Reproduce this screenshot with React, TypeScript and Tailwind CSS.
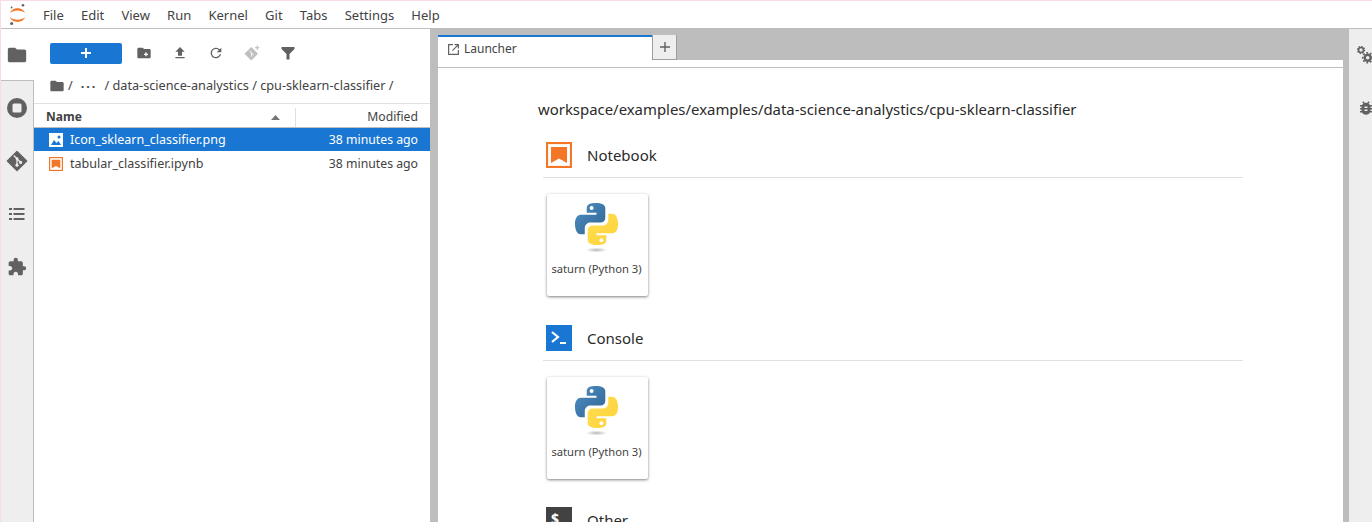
import React from 'react'

const PythonLogo = () => (
  <svg width="45" height="51" viewBox="0 0 46 52">
    <defs>
      <linearGradient id="pyBlue" x1="0" y1="0" x2="1" y2="1">
        <stop offset="0" stopColor="#4f8fc4" />
        <stop offset="1" stopColor="#2f6491" />
      </linearGradient>
      <linearGradient id="pyYellow" x1="0" y1="0" x2="1" y2="1">
        <stop offset="0" stopColor="#ffe052" />
        <stop offset="1" stopColor="#ffd03a" />
      </linearGradient>
      <radialGradient id="pyShadow">
        <stop offset="0" stopColor="#b8b8b8" />
        <stop offset="1" stopColor="#ffffff" />
      </radialGradient>
    </defs>
    <path
      d="M22.5 1C17 1 13 2.400 13 6V11H23V13H7C3 13 1 17 1 22.500C1 28 3 33 7 33H11V27C11 23 14 21 17 21H27C30 21 32 19 32 16V6C32 3 28 1 22.500 1Z"
      fill="url(#pyBlue)"
    />
    <path
      d="M23.5 44C29 44 33 42.600 33 39V34H23V32H39C43 32 45 28 45 22.500C45 17 43 12 39 12H35V18C35 22 32 24 29 24H19C16 24 14 26 14 29V39C14 42 18 44 23.500 44Z"
      fill="url(#pyYellow)"
    />
    <circle cx="18" cy="6" r="2" fill="#fff" />
    <circle cx="28" cy="39" r="2" fill="#fff" />
    <ellipse cx="23" cy="49" rx="11" ry="2.500" fill="url(#pyShadow)" />
  </svg>
)

const Kernel = () => (
  <div className="flex h-[102px] w-[101px] flex-col items-center rounded-[2px] bg-white pr-[2px] pt-[8px] shadow-[0_1px_3px_rgba(0,0,0,0.5)]">
    <PythonLogo />
    <div className="mt-[8px] text-[11.2px] leading-[16px] text-[#424242]">saturn (Python 3)</div>
  </div>
)

const Section = ({ icon, title, top }: { icon: React.ReactNode; title: string; top: string }) => (
  <div className={`ml-[105px] w-[700px] ${top}`}>
    <div className="flex h-[40px] items-center border-b border-[#e0e0e0] pb-[5px]">
      <div className="ml-[3px] flex h-[26px] w-[26px] items-center justify-center">{icon}</div>
      <div className="ml-[15px] text-[15px] text-[#2a2a2a]">{title}</div>
    </div>
    <div className="ml-[4px] mt-[16px]">
      <Kernel />
    </div>
  </div>
)

const NotebookIcon = ({ size = 26, bw = 2.200 }: { size?: number; bw?: number }) => (
  <svg width={size} height={size} viewBox="0 0 26 26">
    <rect x="1" y="1" width="24" height="24" fill="#fff" stroke="#f37726" strokeWidth={bw} />
    <path d="M5 5H21V21L13 16.500L5 21Z" fill="#f37726" />
  </svg>
)

const Folder = ({ size = 18 }: { size?: number }) => (
  <svg width={size} height={size} viewBox="0 0 24 24" fill="#616161">
    <path d="M10 4H4C2.900 4 2 4.900 2 6V18C2 19.100 2.900 20 4 20H20C21.100 20 22 19.100 22 18V8C22 6.900 21.100 6 20 6H12Z" />
  </svg>
)

const GitIcon = () => (
  <svg width="22" height="22" viewBox="0 0 24 24">
    <path d="M12 1.500L22.500 12L12 22.500L1.500 12Z" fill="#616161" strokeLinejoin="round" stroke="#616161" strokeWidth="1.500" />
    <path d="M8.500 6L12 9.500V16M12 9.500L16 13.500" stroke="#eee" strokeWidth="1.400" fill="none" />
    <circle cx="12" cy="16.500" r="1.700" fill="#eee" />
    <circle cx="16" cy="13.500" r="1.700" fill="#eee" />
    <circle cx="12" cy="9.500" r="1.500" fill="#eee" />
  </svg>
)

const menu = ['File', 'Edit', 'View', 'Run', 'Kernel', 'Git', 'Tabs', 'Settings', 'Help']

export default function App() {
  return (
    <div
      className="flex h-[522px] w-[1372px] flex-col overflow-hidden border-l border-t border-[#f9dbe4] bg-white text-[#424242]"
      style={{ fontFamily: '"Noto Sans", sans-serif' }}
    >
      {/* top menu */}
      <div className="flex h-[28px] shrink-0 items-center border-b border-[#bdbdbd] bg-white">
        <svg width="20" height="24" viewBox="0 0 20 24" className="ml-[6px]">
          <path d="M3 10C5 3.500 16 3.500 18 10C15 6.500 6 6.500 3 10Z" fill="#f37726" />
          <path d="M3 14C5 20.500 16 20.500 18 14C15 17.500 6 17.500 3 14Z" fill="#f37726" />
          <circle cx="16" cy="2.200" r="1.300" fill="#616161" />
          <circle cx="4.600" cy="4.500" r="0.900" fill="#616161" />
          <circle cx="4.600" cy="20.500" r="1.500" fill="#616161" />
        </svg>
        <div className="ml-[9px] flex">
          {menu.map((m) => (
            <div key={m} className="mr-[3.200px] px-[7px] text-[13px] leading-[20px] text-[#424242]">
              {m}
            </div>
          ))}
        </div>
      </div>

      <div className="flex min-h-0 flex-1">
        {/* left rail */}
        <div className="flex w-[33px] shrink-0 flex-col border-r border-[#bdbdbd] bg-[#eeeeee]">
          <div className="-mr-px flex h-[52px] items-center justify-center border-b border-[#bdbdbd] bg-white pr-[1px]">
            <Folder size={22} />
          </div>
          <div className="flex flex-col items-center">
            <div className="flex h-[53px] w-full items-center justify-center">
              <svg width="22" height="22" viewBox="0 0 22 22">
                <circle cx="11" cy="11" r="10" fill="#616161" />
                <rect x="6.500" y="6.500" width="9" height="9" rx="1.500" fill="#eee" />
              </svg>
            </div>
            <div className="flex h-[53px] w-full items-center justify-center">
              <GitIcon />
            </div>
            <div className="flex h-[53px] w-full items-center justify-center">
              <svg width="18" height="18" viewBox="0 0 18 18" fill="#616161">
                <rect x="1" y="3" width="3" height="2" />
                <rect x="5.500" y="3" width="11" height="2" />
                <rect x="1" y="8" width="3" height="2" />
                <rect x="5.500" y="8" width="11" height="2" />
                <rect x="1" y="13" width="3" height="2" />
                <rect x="5.500" y="13" width="11" height="2" />
              </svg>
            </div>
            <div className="flex h-[53px] w-full items-center justify-center">
              <svg width="20" height="20" viewBox="0 0 24 24" fill="#616161">
                <path d="M20.500 11H19V7C19 5.900 18.100 5 17 5H13V3.500C13 2.100 11.900 1 10.500 1S8 2.100 8 3.500V5H4C2.900 5 2 5.900 2 7V10.800H3.500C5 10.800 6.200 12 6.200 13.500S5 16.200 3.500 16.200H2V20C2 21.100 2.900 22 4 22H7.800V20.500C7.800 19 9 17.800 10.500 17.800S13.200 19 13.200 20.500V22H17C18.100 22 19 21.100 19 20V16H20.500C21.900 16 23 14.900 23 13.500S21.900 11 20.500 11Z" />
              </svg>
            </div>
          </div>
        </div>

        {/* file browser */}
        <div className="flex w-[396px] shrink-0 flex-col bg-white">
          <div className="flex h-[48px] shrink-0 items-center pl-[16px]">
            <div className="flex h-[21px] w-[72px] items-center justify-center rounded-[2px] bg-[#1976d2]">
              <svg width="12" height="12" viewBox="0 0 12 12" fill="#fff">
                <path d="M5 1H7V5H11V7H7V11H5V7H1V5H5Z" />
              </svg>
            </div>
            <div className="ml-[13px] flex h-[24px] w-[18px] items-center justify-center">
              <svg width="16" height="16" viewBox="0 0 24 24" fill="#616161">
                <path d="M10 4H4C2.900 4 2 4.900 2 6V18C2 19.100 2.900 20 4 20H20C21.100 20 22 19.100 22 18V8C22 6.900 21.100 6 20 6H12Z" />
                <path d="M14 11H16V13H18V15H16V17H14V15H12V13H14Z" fill="#fff" />
              </svg>
            </div>
            <div className="ml-[18px] flex h-[24px] w-[18px] items-center justify-center">
              <svg width="16" height="16" viewBox="0 0 24 24" fill="#616161">
                <path d="M9 16H15V10H19L12 3L5 10H9ZM5 18H19V20H5Z" />
              </svg>
            </div>
            <div className="ml-[18px] flex h-[24px] w-[18px] items-center justify-center">
              <svg width="16" height="16" viewBox="0 0 24 24" fill="#616161">
                <path d="M17.650 6.350A8 8 0 1 0 19.730 14H17.650A6 6 0 1 1 12 6C13.660 6 15.140 6.690 16.220 7.780L13 11H20V4Z" />
              </svg>
            </div>
            <div className="ml-[18px] flex h-[24px] w-[18px] items-center justify-center opacity-40">
              <svg width="18" height="18" viewBox="0 0 24 24">
                <path d="M11 4L20 13L11 22L2 13Z" fill="#616161" />
                <path d="M9 9L11.500 12V17M11.500 12L14 14.500" stroke="#fff" strokeWidth="1.200" fill="none" />
                <path d="M19 2V8M16 5H22" stroke="#616161" strokeWidth="1.500" />
              </svg>
            </div>
            <div className="ml-[18px] flex h-[24px] w-[18px] items-center justify-center">
              <svg width="14" height="14" viewBox="0 0 14 14" fill="#616161">
                <path d="M0.500 1H13.500V3L8.500 8V13.500H5.500V8L0.500 3Z" />
              </svg>
            </div>
          </div>

          <div className="mt-[1px] flex h-[16px] shrink-0 items-center pl-[15px] text-[12.7px] text-[#424242]">
            <Folder size={16} />
            <span className="ml-[3px]">/</span>
            <span className="ml-[8px] font-bold leading-[12px] tracking-[2px]">···</span>
            <span className="ml-[7px]">/ data-science-analystics / cpu-sklearn-classifier /</span>
          </div>

          <div className="mt-[9px] flex h-[24px] shrink-0 items-center border-t border-t-[#e0e0e0] pl-[12px] pt-[3px] text-[12px]">
            <span className="w-[225px] font-bold">Name</span>
            <svg width="9" height="5" viewBox="0 0 9 5" fill="#757575">
              <path d="M0 5L4.500 0L9 5Z" />
            </svg>
            <span className="ml-[15px] h-[19px] w-px bg-[#e0e0e0]" />
            <span className="flex-1 pr-[12px] text-right text-[12.200px]">Modified</span>
          </div>

          <div className="flex h-[24px] shrink-0 items-center border-t border-t-[#bdbdbd] bg-[#1976d2] pl-[15px] pr-[12px] pt-[1px] text-white">
            <svg width="14" height="14" viewBox="0 0 14 14">
              <rect x="0" y="0" width="14" height="14" fill="#fff" />
              <path d="M2 12L5 7L7.500 10L9.500 8L12 12Z" fill="#1976d2" />
              <circle cx="10" cy="4" r="1.500" fill="#1976d2" />
            </svg>
            <span className="ml-[7px] flex-1 text-[12.560px]">Icon_sklearn_classifier.png</span>
            <span className="text-[12.250px]">38 minutes ago</span>
          </div>
          <div className="flex h-[24px] shrink-0 items-center pl-[15px] pr-[12px] pt-[2px]">
            <NotebookIcon size={14} bw={2.400} />
            <span className="ml-[7px] flex-1 text-[12.560px]">tabular_classifier.ipynb</span>
            <span className="text-[12.250px]">38 minutes ago</span>
          </div>
        </div>

        {/* main area */}
        <div className="flex min-w-0 flex-1 flex-col border-x-[8px] border-[#bdbdbd] border-r-[6px] bg-[#bdbdbd]">
          <div className="flex h-[38px] shrink-0 items-start pt-[6px]">
            <div className="flex h-[32px] w-[214px] items-center border-t-2 border-[#1976d2] bg-white pb-[6px] pl-[9px] text-[12px]">
              <svg width="13" height="13" viewBox="0 0 24 24" fill="none" stroke="#616161" strokeWidth="2.200">
                <path d="M11 3H3V21H21V13" />
                <path d="M14 3H21V10M21 3L10 14" />
              </svg>
              <span className="ml-[4px]">Launcher</span>
            </div>
            <div className="flex h-[32px] flex-1 flex-col">
              <div className="flex h-[25px] w-[25px] shrink-0 items-center justify-center border-b border-l border-r border-[#9e9e9e] bg-[#eeeeee]">
                <svg width="12" height="12" viewBox="0 0 12 12" fill="#616161">
                  <path d="M5.300 1H6.700V5.300H11V6.700H6.700V11H5.300V6.700H1V5.300H5.300Z" />
                </svg>
              </div>
              <div className="flex-1 bg-white" />
            </div>
          </div>
          <div className="min-h-0 flex-1 border-t border-[#bdbdbd] bg-white">
            <div className="ml-[100px] mt-[31px] text-[14.920px] leading-[20px] text-[#2a2a2a]">
              workspace/examples/examples/data-science-analystics/cpu-sklearn-classifier
            </div>
            <Section title="Notebook" top="mt-[19px]" icon={<NotebookIcon />} />
            <Section
              title="Console"
              top="mt-[25px]"
              icon={
                <svg width="26" height="26" viewBox="0 0 26 26">
                  <rect width="26" height="26" fill="#1976d2" />
                  <path d="M6 7L12 12L6 17" stroke="#fff" strokeWidth="2.200" fill="none" />
                  <rect x="14" y="17" width="6" height="2" fill="#fff" />
                </svg>
              }
            />
            <Section
              title="Other"
              top="mt-[24px]"
              icon={
                <svg width="26" height="26" viewBox="0 0 26 26">
                  <rect width="26" height="26" fill="#424242" />
                  <text x="5" y="17" fontSize="14" fontWeight="700" fill="#fff">$</text>
                  <rect x="14" y="16" width="6" height="2" fill="#fff" />
                </svg>
              }
            />
          </div>
        </div>

        {/* right rail */}
        <div className="flex w-[23px] shrink-0 flex-col items-start overflow-hidden bg-[#eeeeee] pl-[8px] pt-[17px]">
          <svg width="20" height="20" viewBox="0 0 20 20" fill="none" stroke="#616161" className="shrink-0">
            <circle cx="4" cy="4" r="2.500" strokeWidth="1.600" />
            <circle cx="4" cy="4" r="3.600" strokeWidth="1.200" strokeDasharray="1.400 1.400" />
            <circle cx="10.700" cy="11.700" r="3" strokeWidth="2.400" />
            <circle cx="10.700" cy="11.700" r="5" strokeWidth="1.600" strokeDasharray="1.800 1.800" />
          </svg>
          <svg width="18" height="18" viewBox="0 0 24 24" fill="#616161" className="mt-[33px] shrink-0">
            <path d="M20 8H17.190C16.740 7.220 16.120 6.550 15.370 6.040L17 4.410L15.590 3L13.420 5.170C12.960 5.060 12.490 5 12 5S11.040 5.060 10.590 5.170L8.410 3L7 4.410L8.620 6.040C7.880 6.550 7.260 7.220 6.810 8H4V10H6.090C6.040 10.330 6 10.660 6 11V12H4V14H6V15C6 15.340 6.040 15.670 6.090 16H4V18H6.810C7.850 19.790 9.780 21 12 21S16.150 19.790 17.190 18H20V16H17.910C17.960 15.670 18 15.340 18 15V14H20V12H18V11C18 10.660 17.960 10.330 17.910 10H20ZM14 16H10V14H14ZM14 12H10V10H14Z" />
          </svg>
        </div>
      </div>
    </div>
  )
}
